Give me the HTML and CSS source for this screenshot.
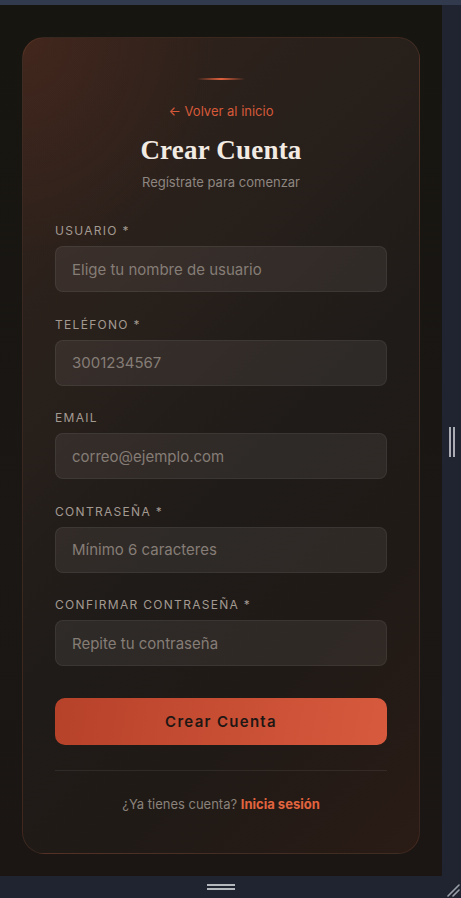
FILE: index.html
```html
<!DOCTYPE html>
<html lang="es">
<head>
<meta charset="utf-8">
<title>Crear Cuenta</title>
<link rel="stylesheet" href="styles.css">
</head>
<body>
<div class="frame">
  <div class="topbar"></div>
  <div class="middle">
    <main class="viewport">
      <section class="card">
        <div class="accent"></div>
        <a class="back" href="#">← Volver al inicio</a>
        <h1 class="title">Crear Cuenta</h1>
        <p class="subtitle">Regístrate para comenzar</p>

        <form class="form">
          <label class="field">
            <span class="label">Usuario *</span>
            <input class="input" type="text" placeholder="Elige tu nombre de usuario">
          </label>
          <label class="field">
            <span class="label">Teléfono *</span>
            <input class="input" type="tel" placeholder="3001234567">
          </label>
          <label class="field">
            <span class="label">Email</span>
            <input class="input" type="email" placeholder="correo@ejemplo.com">
          </label>
          <label class="field">
            <span class="label">Contraseña *</span>
            <input class="input" type="password" placeholder="Mínimo 6 caracteres">
          </label>
          <label class="field">
            <span class="label">Confirmar contraseña *</span>
            <input class="input" type="password" placeholder="Repite tu contraseña">
          </label>
          <button class="submit" type="button">Crear Cuenta</button>
        </form>

        <div class="divider"></div>
        <p class="footer">¿Ya tienes cuenta? <a class="login" href="#">Inicia sesión</a></p>
      </section>
    </main>
    <aside class="side">
      <span class="vgrip"></span>
    </aside>
  </div>
  <div class="bottombar">
    <span class="hgrip"></span>
    <svg class="corner" width="14" height="14" viewBox="0 0 14 14">
      <path d="M2 13 L13 2 M7 13 L13 7" stroke="#9aa0a8" stroke-width="1.6" stroke-linecap="round"/>
    </svg>
  </div>
</div>
</body>
</html>
```

FILE: styles.css
```css
* { box-sizing: border-box; }

html, body {
  margin: 0;
  padding: 0;
  background: #1f2430;
}

body {
  font-family: "Inter", "Lato", sans-serif;
}

.frame {
  width: 461px;
  height: 898px;
  display: flex;
  flex-direction: column;
  overflow: hidden;
}

.topbar {
  height: 5px;
  flex: none;
  background: #323b4d;
}

.middle {
  flex: 1;
  display: flex;
  min-height: 0;
}

.viewport {
  width: 442px;
  flex: none;
  background: linear-gradient(180deg, #171510 0%, #1a1714 60%, #1b1613 100%);
  padding: 32px 22px 0;
}

.side {
  flex: 1;
  background: #1f2430;
  display: flex;
  align-items: center;
  justify-content: center;
  padding-left: 1px;
}

.vgrip {
  width: 6px;
  height: 30px;
  border-left: 2px solid #a9adb3;
  border-right: 2px solid #a9adb3;
  margin-top: 2px;
}

.bottombar {
  height: 22px;
  flex: none;
  background: #1f2430;
  position: relative;
  display: flex;
  justify-content: center;
  padding-left: 0;
}

.hgrip {
  width: 28px;
  height: 6px;
  margin-top: 8px;
  margin-right: 20px;
  border-top: 2px solid #b4b7bc;
  border-bottom: 2px solid #b4b7bc;
}

.corner {
  position: absolute;
  right: 1px;
  bottom: 1px;
}

/* card */
.card {
  height: 817px;
  border-radius: 22px;
  border: 1px solid rgba(190, 110, 80, 0.16);
  background:
    radial-gradient(ellipse 70% 40% at 0% 0%, rgba(120, 55, 35, 0.22), transparent 70%),
    linear-gradient(135deg, #33221b 0%, #28201b 30%, #1f1b18 55%, #201a16 75%, #2a1b15 100%);
  padding: 40px 32px 0;
  display: flex;
  flex-direction: column;
  align-items: center;
}

.accent {
  width: 48px;
  height: 2px;
  background: linear-gradient(90deg, rgba(214, 88, 58, 0), #e0603c 50%, rgba(214, 88, 58, 0));
}

.back {
  margin-top: 22px;
  font-size: 13px;
  line-height: 18px;
  color: #d65a3a;
  text-decoration: none;
}

.title {
  margin: 13px 0 0;
  font-family: "Liberation Serif", "DejaVu Serif", serif;
  font-weight: 700;
  font-size: 27px;
  line-height: 34px;
  color: #f2ebe3;
  letter-spacing: 0.2px;
}

.subtitle {
  margin: 6px 0 0;
  font-size: 13px;
  line-height: 18px;
  color: #8e8680;
}

.form {
  align-self: stretch;
  margin-top: 32px;
  display: flex;
  flex-direction: column;
}

.field {
  display: flex;
  flex-direction: column;
  margin-bottom: 24.5px;
}

.label {
  font-size: 12px;
  line-height: 16px;
  letter-spacing: 1.3px;
  text-transform: uppercase;
  color: #a39a92;
  margin-bottom: 7px;
}

.input {
  height: 46px;
  width: 100%;
  border-radius: 8px;
  border: 1px solid rgba(255, 255, 255, 0.06);
  background: rgba(255, 245, 235, 0.07);
  padding: 0 16px;
  font-family: inherit;
  font-size: 15px;
  color: #ddd5cd;
  outline: none;
}

.input::placeholder {
  color: #857d76;
}

.submit {
  margin-top: 7px;
  height: 47px;
  border: none;
  border-radius: 10px;
  background: linear-gradient(100deg, #b6422a 0%, #c94f34 55%, #d75a3e 100%);
  font-family: inherit;
  font-size: 15px;
  font-weight: 600;
  letter-spacing: 1.3px;
  color: #1f1714;
}

.divider {
  align-self: stretch;
  height: 1px;
  margin-top: 25px;
  background: rgba(255, 255, 255, 0.07);
}

.footer {
  margin: 24px 0 0;
  font-size: 13px;
  line-height: 18px;
  color: #8a827b;
}

.login {
  color: #e2643f;
  font-weight: 700;
  text-decoration: none;
}
```
